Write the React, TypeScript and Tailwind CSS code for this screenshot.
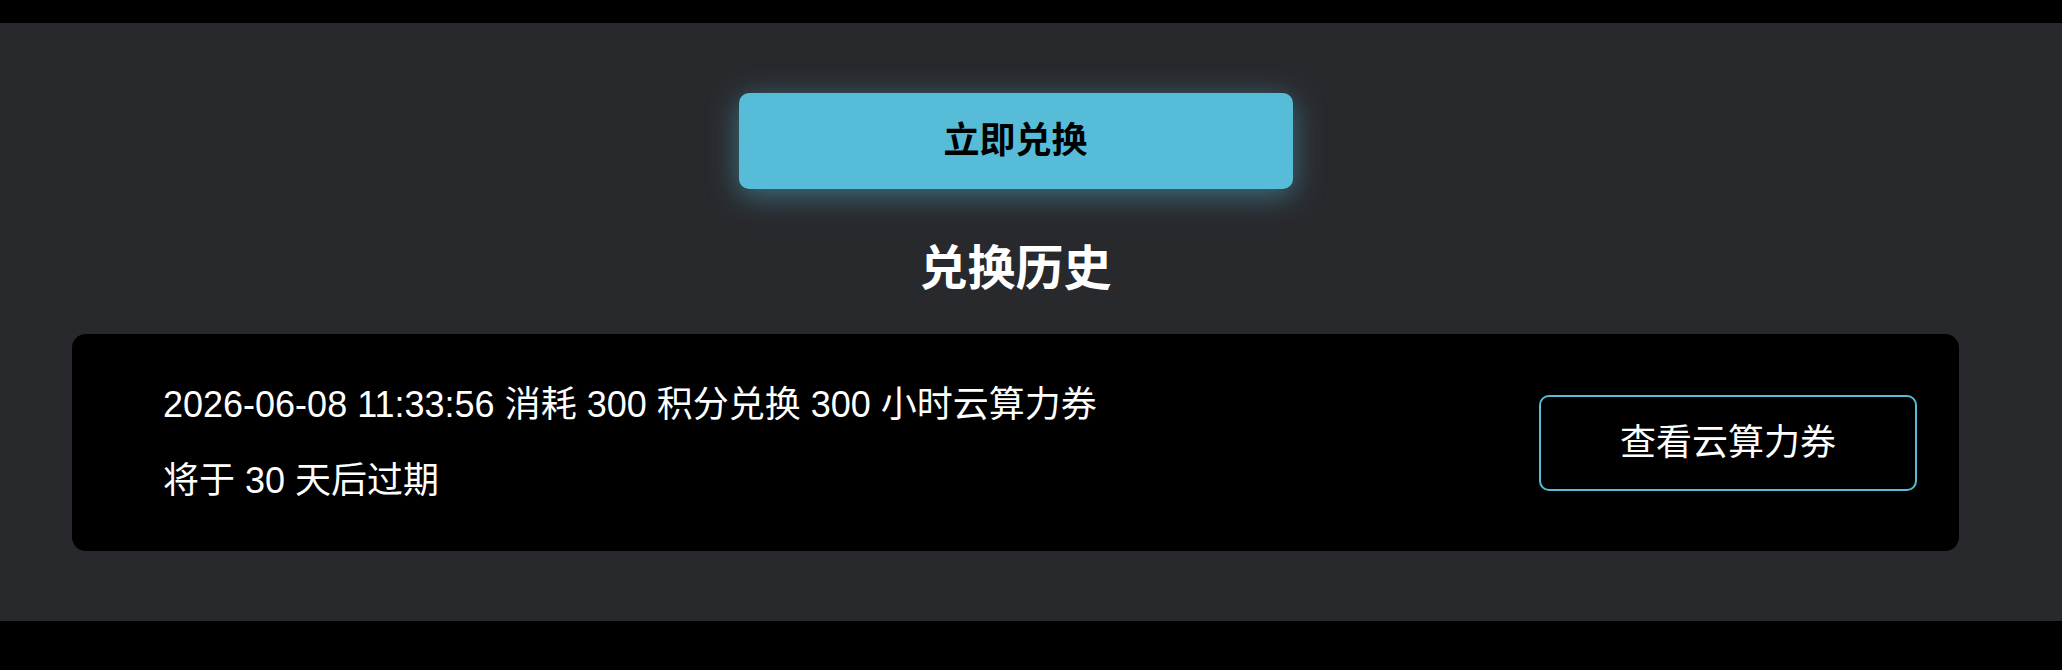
const records = [
  {
    id: 1,
    time: '2026-06-08 11:33:56',
    cost: 300,
    hours: 300,
    expireDays: 30,
  },
];

const font = {
  fontFamily: '"Liberation Sans", "Noto Sans CJK SC", sans-serif',
};

const App = () => {
  return (
    <div className="bg-black h-[670px] w-full pt-[23px]" style={font}>
      <div className="bg-[#28292d] h-[598px] w-full">
        <div className="w-[2031px] px-[72px] pt-[70px] flex flex-col items-center">
          <button
            type="button"
            className="w-[554px] h-[96px] rounded-[10px] bg-[#56bcd8] text-black text-[36px] font-bold shadow-[0_6px_30px_rgba(86,188,216,0.5)]"
          >
            立即兑换
          </button>
          <h2 className="mt-[56px] text-white text-[48px] leading-[48px] font-bold">
            兑换历史
          </h2>
          <div className="mt-[41px] w-full space-y-4">
            {records.map((item) => (
              <div
                key={item.id}
                className="bg-black h-[217px] rounded-[14px] pl-[91px] pr-[42px] flex items-center justify-between"
              >
                <div className="text-white text-[36px] leading-[54px] flex flex-col gap-[22px]">
                  <p>
                    {item.time} 消耗 {item.cost} 积分兑换 {item.hours} 小时云算力券
                  </p>
                  <p>将于 {item.expireDays} 天后过期</p>
                </div>
                <button
                  type="button"
                  className="w-[378px] h-[96px] rounded-[10px] border-2 border-[#56bcd8] text-white text-[36px]"
                >
                  查看云算力券
                </button>
              </div>
            ))}
          </div>
        </div>
      </div>
    </div>
  );
};

export default App;
